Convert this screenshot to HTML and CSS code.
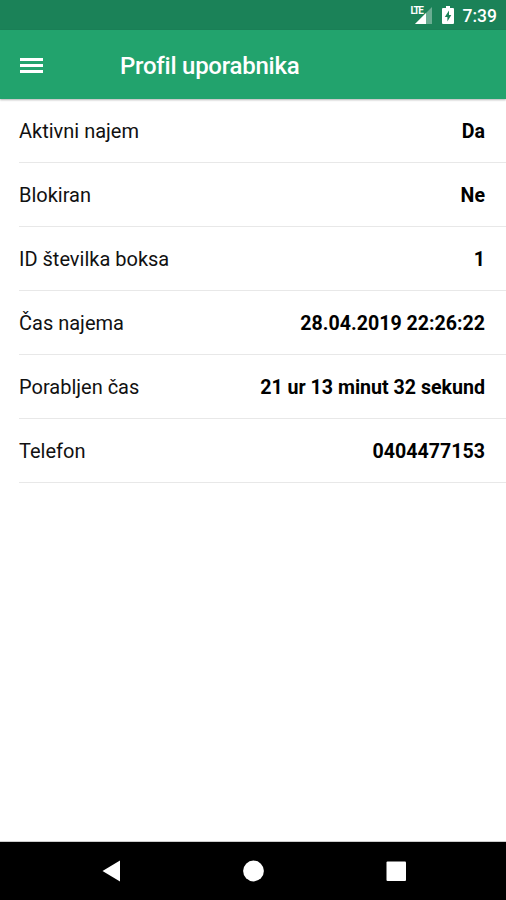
FILE: index.html
```html
<!DOCTYPE html>
<html lang="sl">
<head>
    <meta charset="UTF-8">
    <title>Profil uporabnika</title>
    <link rel="stylesheet" href="styles.css">
</head>
<body>
<div class="screen">
    <div class="status">
        <div class="signal">
            <svg width="22" height="20" viewBox="0 0 22 20">
                <path d="M21 2v17H4z" fill="#fff" opacity=".35"/>
                <path d="M15 8v11H4z" fill="#fff"/>
            </svg>
            <span class="lte">LTE</span>
        </div>
        <svg class="battery" width="12" height="18" viewBox="0 0 12 18">
            <path d="M4 0h4v2h3q1 0 1 1v14q0 1-1 1H1q-1 0-1-1V3q0-1 1-1h3z" fill="#fff"/>
            <path d="M7 4.500L2.800 11H5.400v4.500L9.300 9H7z" fill="#1b8258"/>
        </svg>
        <span class="time">7:39</span>
    </div>
    <div class="header">
        <div class="menu"><span></span><span></span><span></span></div>
        <h1>Profil uporabnika</h1>
    </div>
    <ul class="list">
        <li><span>Aktivni najem</span><b>Da</b></li>
        <li><span>Blokiran</span><b>Ne</b></li>
        <li><span>ID številka boksa</span><b>1</b></li>
        <li><span>Čas najema</span><b>28.04.2019 22:26:22</b></li>
        <li><span>Porabljen čas</span><b>21 ur 13 minut 32 sekund</b></li>
        <li><span>Telefon</span><b>0404477153</b></li>
    </ul>
    <div class="navbar">
        <svg width="506" height="58" viewBox="0 0 506 58">
            <path d="M102.500 29L120 18.500v21z" fill="#fff"/>
            <circle cx="253.500" cy="29" r="10.400" fill="#fff"/>
            <rect x="386.500" y="19.500" width="19.500" height="19.500" rx="1" fill="#fff"/>
        </svg>
    </div>
</div>
</body>
</html>
```

FILE: styles.css
```css
body,ul,h1{ margin: 0;padding: 0;}
body{ font-family: Roboto, "Noto Sans", sans-serif; background-color: #fff; color: #111;}
.screen{ height: 900px; display: flex; flex-direction: column; overflow: hidden;}
.status{ height: 30px; background-color: #1b8258; display: flex; align-items: center; justify-content: flex-end; padding-right: 9px; color: #fff;}
.signal{ position: relative; width: 22px; height: 20px; margin-right: 9px;}
.signal svg{ display: block;}
.lte{ position: absolute; left: 0; top: 1px; font-size: 10px; line-height: 9px; font-weight: bold; letter-spacing: -1.4px;}
.battery{ margin-right: 9px;}
.time{ font-size: 17.5px; font-weight: 500; line-height: 20px; padding-top: 1px;}
.header{ height: 69px; background-color: #22a36d; display: flex; align-items: center; padding-left: 20px; color: #fff; position: relative; box-shadow: 0 1px 2px rgba(0,0,0,.3);}
.menu{ width: 100px; padding-top: 1px;}
.menu span{ display: block; width: 23px; height: 3px; margin-bottom: 3px; background-color: #fff;}
.menu span:last-child{ margin-bottom: 0;}
.header h1{ font-size: 24px; font-weight: 500; letter-spacing: -.25px; padding-top: 2px;}
.list{ flex: 1; list-style: none;}
.list li{ height: 63px; margin-left: 19px; padding-right: 21px; border-bottom: 1px solid #e8e8e8; display: flex; align-items: center; justify-content: space-between; font-size: 20px;}
.list span,.list b{ padding-top: 1px;}
.list b{ font-size: 19.6px; color: #000;}
.navbar{ height: 58px; background-color: #000; box-shadow: 0 -1px 0 #ccc;}
```
